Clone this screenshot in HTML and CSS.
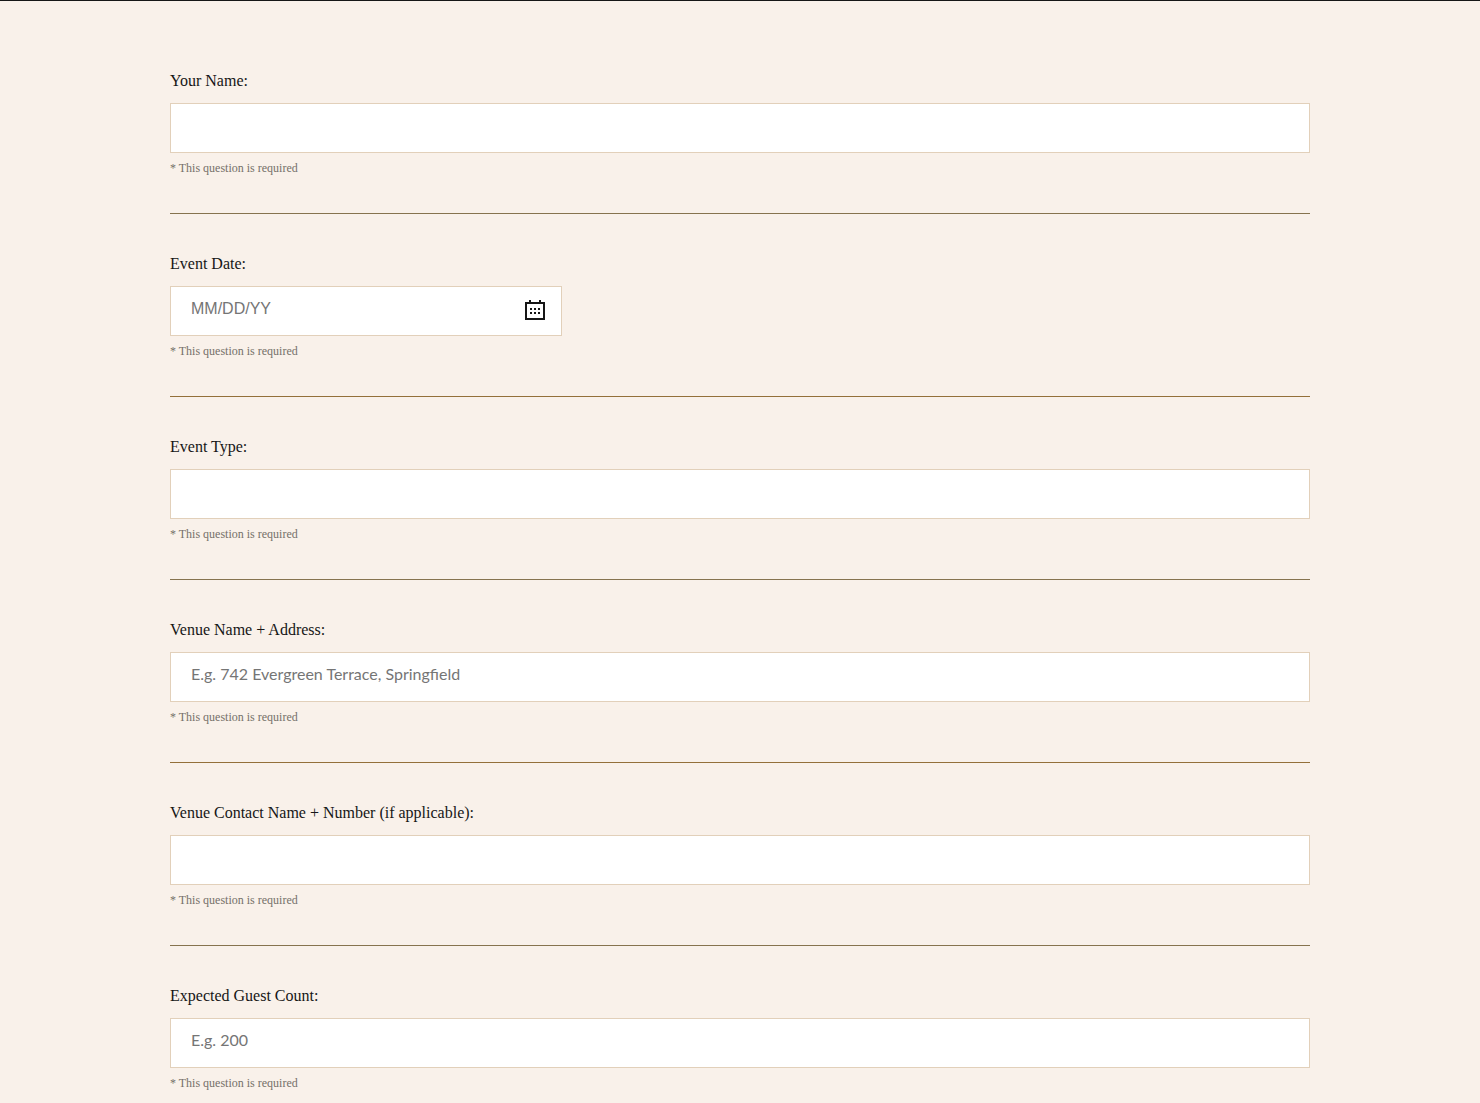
FILE: index.html
```html
<!DOCTYPE html>
<html lang="en">
<head>
<meta charset="utf-8">
<meta name="viewport" content="width=device-width, initial-scale=1">
<title>Event Questionnaire</title>
<link rel="stylesheet" href="styles.css">
</head>
<body>
<main class="page">
  <form class="form">
    <div class="question">
      <label class="label" for="name">Your Name:</label>
      <input class="field" id="name" type="text" aria-describedby="name-help">
      <p class="help" id="name-help">* This question is required</p>
    </div>
    <div class="question question-alt">
      <label class="label" for="date">Event Date:</label>
      <div class="date">
        <input class="field date-field" id="date" type="text" placeholder="MM/DD/YY" aria-describedby="date-help">
        <button class="date-button" type="button" aria-label="Open calendar">
          <svg width="20" height="20" viewBox="0 0 20 20" fill="#161616" shape-rendering="crispEdges" aria-hidden="true">
            <path fill-rule="evenodd" d="M0 2h4V0h2v2h8V0h2v2h4v18H0zM2 4v14h16V4z"/>
            <path d="M5 8h2v2H5zM9 8h2v2H9zM13 8h2v2h-2zM5 12h2v2H5zM9 12h2v2H9zM13 12h2v2h-2z"/>
          </svg>
        </button>
      </div>
      <p class="help" id="date-help">* This question is required</p>
    </div>
    <div class="question">
      <label class="label" for="type">Event Type:</label>
      <input class="field" id="type" type="text" aria-describedby="type-help">
      <p class="help" id="type-help">* This question is required</p>
    </div>
    <div class="question question-alt">
      <label class="label" for="venue">Venue Name + Address:</label>
      <input class="field" id="venue" type="text" placeholder="E.g. 742 Evergreen Terrace, Springfield" aria-describedby="venue-help">
      <p class="help" id="venue-help">* This question is required</p>
    </div>
    <div class="question">
      <label class="label" for="contact">Venue Contact Name + Number (if applicable):</label>
      <input class="field" id="contact" type="text" aria-describedby="contact-help">
      <p class="help" id="contact-help">* This question is required</p>
    </div>
    <div class="question question-last">
      <label class="label" for="guests">Expected Guest Count:</label>
      <input class="field" id="guests" type="text" placeholder="E.g. 200" aria-describedby="guests-help">
      <p class="help" id="guests-help">* This question is required</p>
    </div>
  </form>
</main>
</body>
</html>
```

FILE: styles.css
```css
* {
  box-sizing: border-box;
}

body {
  margin: 0;
  background: #f9f1ea;
  color: #161616;
  font-family: "Liberation Serif", "Times New Roman", serif;
  font-size: 16px;
}

.page {
  border-top: 1px solid #161616;
  padding: 30px 20px 10px;
}

.form {
  max-width: 1140px;
  margin: 0 auto;
}

.question {
  display: flex;
  flex-direction: column;
  padding: 38px 0 36px;
  border-bottom: 1px solid #86734f;
}

.question-alt {
  border-bottom-color: #94703a;
}

.question-last {
  padding-bottom: 0;
  border-bottom: 0;
}

.label {
  margin-bottom: 10px;
  line-height: 24px;
}

.field {
  width: 100%;
  height: 50px;
  padding: 0 20px 8px;
  border: 1px solid #e2d0ba;
  border-radius: 0;
  background: #fff;
  color: #161616;
  font-family: Lato, "Liberation Sans", sans-serif;
  font-size: 16px;
}

.field::placeholder {
  color: #757575;
  opacity: 1;
}

.date {
  position: relative;
  width: 100%;
  max-width: 392px;
}

.date-field {
  padding: 0 50px 4px 20px;
  font-family: "Liberation Sans", Arial, sans-serif;
}

.date-button {
  position: absolute;
  top: 14px;
  right: 17px;
  width: 20px;
  height: 20px;
  padding: 0;
  border: 0;
  background: none;
  cursor: pointer;
}

.date-button svg {
  display: block;
}

.help {
  margin: 6px 0 0;
  color: #757069;
  font-size: 12px;
  line-height: 18px;
}
```
